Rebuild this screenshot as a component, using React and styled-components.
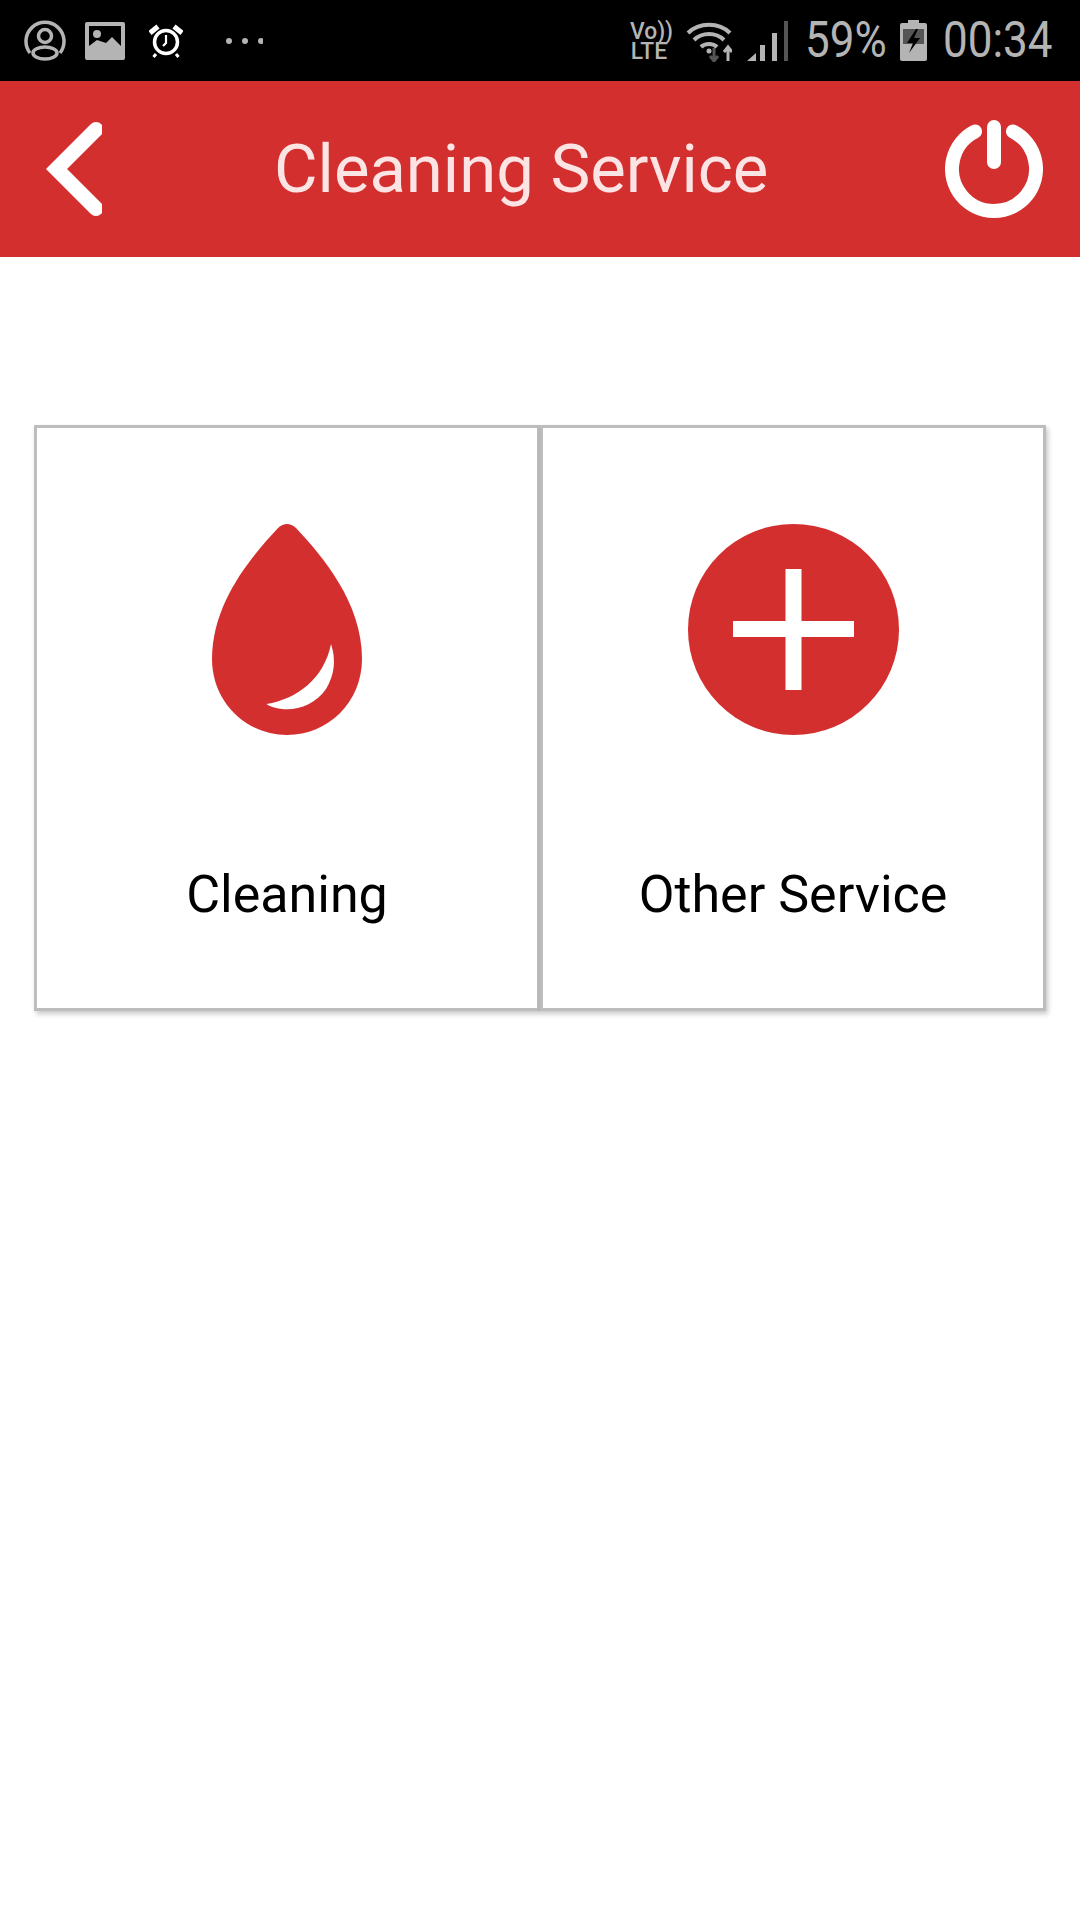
import styled, { createGlobalStyle } from "styled-components";

const RED = "#d32f2f";
const GREY = "#b4b4b4";

const GlobalStyle = createGlobalStyle`
  html, body {
    margin: 0;
    padding: 0;
    background: #fff;
    font-family: Roboto, "Liberation Sans", sans-serif;
  }
`;

const Page = styled.div`
  width: 1080px;
  height: 1920px;
  background: #fff;
  overflow: hidden;
`;

const StatusBar = styled.div`
  height: 81px;
  background: #000;
  display: flex;
  align-items: center;
  padding: 0 27px 0 24px;
  box-sizing: border-box;
`;

const StatusIcon = styled.svg`
  display: block;
  flex: none;
  margin-left: ${(p) => p.$gap || 0}px;
`;

const Spacer = styled.div`
  flex: 1;
`;

const Network = styled.div`
  width: 40px;
  color: ${GREY};
  font-weight: 500;
  font-size: 24px;
  line-height: 20px;
  text-align: center;
  white-space: pre-line;
  transform: scaleX(0.95);
`;

const StatusText = styled.span`
  color: ${GREY};
  font-size: 50px;
  line-height: 81px;
  white-space: nowrap;
  margin-left: ${(p) => p.$gap || 0}px;
  width: ${(p) => p.$width}px;
  display: inline-block;
  transform-origin: left center;
  transform: scaleX(0.88);
`;

const Header = styled.header`
  height: 176px;
  background: ${RED};
  display: flex;
  align-items: center;
`;

const BackIcon = styled.svg`
  display: block;
  margin-left: 46px;
  flex: none;
`;

const Title = styled.h1`
  margin: 0 0 0 172px;
  font-size: 67px;
  font-weight: 400;
  line-height: 70px;
  color: #fde4e4;
  white-space: nowrap;
`;

const PowerIcon = styled.svg`
  display: block;
  margin-left: auto;
  margin-right: 37px;
  flex: none;
`;

const Grid = styled.main`
  display: grid;
  grid-template-columns: 506px 506px;
  margin: 168px 0 0 34px;
  width: 1012px;
  height: 586px;
`;

const Cell = styled.div`
  border: 3px solid #bdbdbd;
  box-sizing: border-box;
  box-shadow: 2px 3px 5px rgba(0, 0, 0, 0.22);
  display: flex;
  flex-direction: column;
  align-items: center;
  padding-top: 96px;
  background: #fff;
`;

const CardIcon = styled.svg`
  display: block;
  flex: none;
`;

const Label = styled.div`
  margin-top: 132px;
  font-size: 52px;
  line-height: 56px;
  color: #000;
`;

function App() {
  return (
    <Page>
      <GlobalStyle />
      <StatusBar>
        <StatusIcon width="42" height="42" viewBox="0 0 42 42" fill="none" stroke={GREY} strokeWidth="3.5">
          <path d="M6 33A19 19 0 1 1 36 33" />
          <circle cx="21" cy="16" r="6.5" />
          <ellipse cx="21" cy="33" rx="12" ry="6" />
        </StatusIcon>
        <StatusIcon $gap={19} width="40" height="38" viewBox="0 0 40 38">
          <rect width="40" height="38" rx="2" fill={GREY} />
          <path d="M4 4H36V24L27 15L21 21L12 18L4 24Z" fill="#000" />
          <circle cx="12" cy="12" r="4" fill={GREY} />
        </StatusIcon>
        <StatusIcon $gap={24} width="34" height="34" viewBox="0 0 34 34" fill="none" stroke="#fff" strokeWidth="3.5">
          <circle cx="17" cy="18" r="11.5" />
          <path d="M17 11V19L14 22" strokeWidth="2.2" />
          <path d="M1 9L9 2.5M33 9L25 2.5" strokeWidth="5" />
          <path d="M7 30L4.5 33M27 30L29.5 33" strokeWidth="3" />
        </StatusIcon>
        <StatusIcon $gap={42} width="38" height="8" viewBox="0 0 38 8" fill={GREY}>
          <circle cx="4" cy="4" r="3" />
          <circle cx="20" cy="4" r="3" />
          <circle cx="36" cy="4" r="3" />
        </StatusIcon>
        <Spacer />
        <Network>{"Vo))\nLTE"}</Network>
        <StatusIcon $gap={17} width="46" height="42" viewBox="0 0 46 42" fill="none" stroke={GREY} strokeWidth="4">
          <path d="M2 13C13 2 33 2 44 13" />
          <path d="M8 20C16 12 30 12 38 20" />
          <path d="M15 27C19 23 27 23 31 27" />
          <circle cx="23" cy="31" r="2.5" fill={GREY} stroke="none" />
          <path d="M35 41V27M31 32L35 27L39 32" strokeWidth="3" stroke={GREY} transform="translate(7 0)" />
          <path d="M35 28V41M31 36L35 41L39 36" strokeWidth="3" stroke="#555" transform="translate(-7 0)" />
        </StatusIcon>
        <StatusIcon $gap={15} width="42" height="42" viewBox="0 0 42 42">
          <path d="M0 41L9 33V41Z" fill={GREY} />
          <rect x="13" y="25" width="5" height="16" fill={GREY} />
          <rect x="25" y="13" width="5" height="28" fill={GREY} />
          <rect x="37" y="1" width="4" height="40" fill="#555" />
        </StatusIcon>
        <StatusText $gap={16} $width={95}>59%</StatusText>
        <StatusIcon width="27" height="41" viewBox="0 0 27 41">
          <path d="M8 0H19V3H25Q27 3 27 5V39Q27 41 25 41H2Q0 41 0 39V5Q0 3 2 3H8Z" fill={GREY} />
          <rect x="3" y="9" width="21" height="15" fill="#555" />
          <path d="M16 9L7 23H13L9 33L20 18H14L18 9Z" fill="#000" />
        </StatusIcon>
        <StatusText $gap={16} $width={110}>00:34</StatusText>
      </StatusBar>

      <Header>
        <BackIcon width="56" height="98" viewBox="0 0 56 98" fill="none" stroke="#fff" strokeWidth="15" strokeLinecap="round" strokeLinejoin="miter">
          <path d="M50 9.5L10.5 49L50 88.5" />
        </BackIcon>
        <Title>Cleaning Service</Title>
        <PowerIcon width="98" height="98" viewBox="0 0 98 98" fill="none" stroke="#fff" strokeLinecap="round">
          <path d="M30 11.5A42 42 0 1 0 68 11.5" strokeWidth="14" />
          <path d="M49 7V42" strokeWidth="14" />
        </PowerIcon>
      </Header>

      <Grid>
        <Cell>
          <CardIcon width="150" height="211" viewBox="0 0 150 211">
            <path d="M66 4Q75 -4 84 4C110 32 150 78 150 135C150 178 116 211 75 211C34 211 0 178 0 135C0 78 40 32 66 4Z" fill={RED} />
            <path d="M119 120C124 135 123 150 114 165C104 180 85 187 70 185C66 184.5 58 183 54.5 180C85 175 112 155 119 120Z" fill="#fff" />
          </CardIcon>
          <Label>Cleaning</Label>
        </Cell>
        <Cell>
          <CardIcon width="211" height="211" viewBox="0 0 211 211">
            <circle cx="105.5" cy="105.5" r="105.5" fill={RED} />
            <path d="M97.5 45H113.5V97H166V113H113.5V166H97.5V113H45V97H97.5Z" fill="#fff" />
          </CardIcon>
          <Label>Other Service</Label>
        </Cell>
      </Grid>
    </Page>
  );
}

export default App;
